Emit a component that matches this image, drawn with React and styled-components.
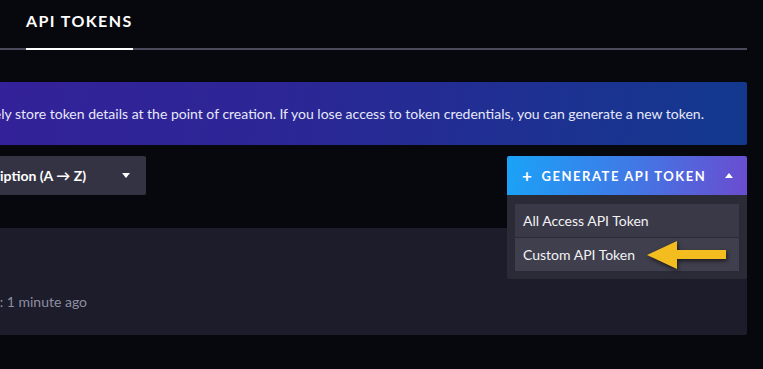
import React from 'react';
import styled, { createGlobalStyle } from 'styled-components';

const GlobalStyle = createGlobalStyle`
  html, body {
    margin: 0;
    padding: 0;
    background: #07080e;
    overflow: hidden;
  }
  body {
    font-family: 'Lato', 'Open Sans', sans-serif;
    color: #ffffff;
  }
`;

const OFFSET = 300;

const Page = styled.div`
  width: ${747 + OFFSET}px;
  margin-left: -${OFFSET}px;
  height: 369px;
  display: flex;
  flex-direction: column;
`;

const Tabs = styled.div`
  display: flex;
  padding-left: ${OFFSET + 26}px;
  height: 48px;
  border-bottom: 2px solid #4a4a5d;
`;

const Tab = styled.div`
  display: flex;
  align-items: flex-start;
  padding-top: 11px;
  box-sizing: border-box;
  height: 50px;
  margin-bottom: -2px;
  border-bottom: 2px solid ${(p) => (p.active ? '#ffffff' : 'transparent')};
  font-size: 16px;
  font-weight: 700;
  letter-spacing: 1.4px;
  color: #ffffff;
`;

const Banner = styled.div`
  margin-top: 32px;
  height: 63px;
  display: flex;
  align-items: center;
  justify-content: flex-end;
  padding: 0 43px 0 0;
  border-radius: 2px;
  background: linear-gradient(100deg, #3a1d9c 0%, #2c2696 55%, #12398e 100%);
  font-size: 14px;
  color: #e6e8f8;
  white-space: nowrap;
`;

const Toolbar = styled.div`
  margin-top: 11px;
  display: flex;
  justify-content: space-between;
  align-items: flex-start;
  position: relative;
  z-index: 2;
`;

const SortSelect = styled.div`
  width: ${OFFSET + 146}px;
  height: 39px;
  box-sizing: border-box;
  display: flex;
  align-items: center;
  justify-content: flex-end;
  padding-right: 16px;
  gap: 36px;
  background: #343343;
  border-radius: 2px;
  font-size: 14px;
  font-weight: 700;
  color: #ffffff;
  white-space: nowrap;
`;

const Caret = styled.span`
  width: 0;
  height: 0;
  border-left: 4.5px solid transparent;
  border-right: 4.5px solid transparent;
  ${(p) => (p.up ? 'border-bottom: 5px solid #ffffff;' : 'border-top: 5px solid #ffffff;')}
`;

const Generate = styled.div`
  position: relative;
  width: 240px;
`;

const GenerateButton = styled.div`
  height: 39px;
  box-sizing: border-box;
  display: flex;
  align-items: center;
  padding: 0 14px 0 15px;
  background: linear-gradient(100deg, #1aa3f8 0%, #3f7ae6 50%, #6b4ccf 100%);
  border-radius: 2px 2px 0 0;
  font-size: 13px;
  font-weight: 700;
  letter-spacing: 1.55px;
  color: #ffffff;
`;

const Plus = styled.span`
  font-size: 17px;
  font-weight: 700;
  margin-right: 8px;
  line-height: 1;
`;

const ButtonLabel = styled.span`
  flex: 1;
`;

const Menu = styled.div`
  position: absolute;
  top: 39px;
  left: 0;
  right: 0;
  background: #2b2a37;
  padding: 9px 8px 8px 8px;
  display: flex;
  flex-direction: column;
  gap: 1px;
  border-radius: 0 0 2px 2px;
`;

const MenuItem = styled.div`
  position: relative;
  height: 33px;
  display: flex;
  align-items: center;
  padding-left: 8px;
  background: ${(p) => (p.hover ? '#403f4d' : '#3a3947')};
  font-size: 14px;
  color: #f2f2f6;
`;

const Pointer = styled.svg`
  position: absolute;
  left: 127px;
  top: 0px;
  filter: drop-shadow(1px 2px 2px rgba(0, 0, 0, 0.6));
`;

const Card = styled.div`
  margin-top: 33px;
  height: 107px;
  background: #1d1c2b;
  border-radius: 0 2px 2px 0;
  display: flex;
  align-items: flex-end;
  justify-content: flex-start;
  padding-bottom: 25px;
  box-sizing: border-box;
`;

const Meta = styled.div`
  width: ${OFFSET + 87}px;
  text-align: right;
  font-size: 14px;
  color: #8f8fa1;
  white-space: nowrap;
`;

export default function App() {
  return (
    <>
      <GlobalStyle />
      <Page>
        <Tabs>
          <Tab active>API TOKENS</Tab>
        </Tabs>
        <Banner>
          Please securely store token details at the point of creation. If you lose access to token credentials, you can generate a new token.
        </Banner>
        <Toolbar>
          <SortSelect>
            <span>Sort by: Description (A → Z)</span>
            <Caret />
          </SortSelect>
          <Generate>
            <GenerateButton>
              <Plus>+</Plus>
              <ButtonLabel>GENERATE API TOKEN</ButtonLabel>
              <Caret up />
            </GenerateButton>
            <Menu>
              <MenuItem>All Access API Token</MenuItem>
              <MenuItem hover>
                Custom API Token
                <Pointer width="84" height="32" viewBox="0 0 84 32">
                  <polygon points="5,17 35,3 35,12 84,12 84,21 35,21 35,31" fill="#f4bd1f" />
                </Pointer>
              </MenuItem>
            </Menu>
          </Generate>
        </Toolbar>
        <Card>
          <Meta>Last used: 1 minute ago</Meta>
        </Card>
      </Page>
    </>
  );
}
